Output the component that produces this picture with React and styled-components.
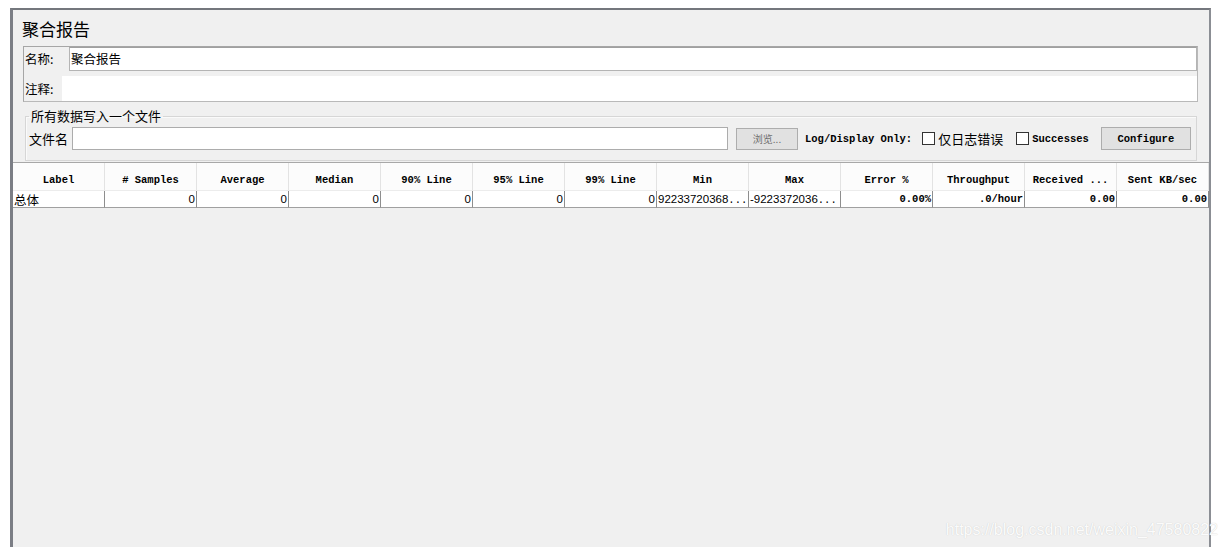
import React from 'react';
import styled, { createGlobalStyle } from 'styled-components';

const GlobalStyle = createGlobalStyle`
  html, body {
    margin: 0;
    background: #ffffff;
  }
  body {
    font-family: "Noto Sans CJK SC", "Liberation Sans", sans-serif;
    color: #000;
  }
`;

const Page = styled.div`
  padding: 8px 0 0 10px;
  height: 547px;
  box-sizing: border-box;
  overflow: hidden;
`;

const Frame = styled.div`
  position: relative;
  width: 1201px;
  height: 539px;
  box-sizing: border-box;
  background: #f0f0f0;
  border-top: 2px solid #74777d;
  border-left: 3px solid #7b7e85;
  border-right: 2px solid #8b8e94;
  display: flex;
  flex-direction: column;
`;

const Title = styled.div`
  height: 36px;
  box-sizing: border-box;
  padding: 8px 0 0 9px;
  font-size: 17px;
  line-height: 22px;
`;

const InfoBox = styled.div`
  margin-left: 10px;
  width: 1175px;
  height: 56px;
  box-sizing: border-box;
  border: 1px solid #b9b9b9;
  border-top-color: #a6a6a6;
  border-left-color: #a6a6a6;
  display: flex;
  flex-direction: column;
`;

const InfoRow = styled.div`
  display: flex;
  align-items: stretch;
  height: ${p => p.$h}px;
  margin-top: ${p => p.$gap || 0}px;
`;

const RowLabel = styled.div`
  width: ${p => p.$w}px;
  flex: none;
  font-size: 12.5px;
  line-height: ${p => p.$lh}px;
  padding-left: 1px;
  box-sizing: border-box;
`;

const TextField = styled.div`
  flex: 1;
  background: #fff;
  border: ${p => (p.$bare ? 'none' : '1px solid #b4b4b4')};
  border-top-color: ${p => (p.$bare ? 'transparent' : '#a0a0a0')};
  font-size: 12.5px;
  line-height: 21px;
  padding-left: 1px;
`;

const FileSet = styled.fieldset`
  margin: 6px 0 0 12px;
  width: 1172px;
  box-sizing: border-box;
  padding: 3px 5px 10px 3px;
  border: 1px solid #d6d6d6;
  box-shadow: inset 1px 1px 0 #fafafa;
  min-inline-size: 0;
`;

const Legend = styled.legend`
  padding: 0 2px;
  font-size: 13px;
  line-height: 16px;
`;

const FileRow = styled.div`
  display: flex;
  align-items: center;
  height: 23px;
  white-space: nowrap;
  & > * { flex: none; }
`;

const FileLabel = styled.span`
  font-size: 13px;
  line-height: 23px;
  width: 43px;
`;

const FileInput = styled.div`
  width: 656px;
  height: 23px;
  box-sizing: border-box;
  background: #fff;
  border: 1px solid #acacac;
`;

const Button = styled.div`
  width: ${p => p.$w}px;
  height: ${p => p.$h}px;
  margin-left: ${p => p.$ml}px;
  box-sizing: border-box;
  background: #e1e1e1;
  border: 1px solid #adadad;
  display: flex;
  align-items: center;
  justify-content: center;
  color: ${p => (p.$dim ? '#6f6f6f' : '#000')};
  font-family: ${p => (p.$mono ? '"Liberation Mono", monospace' : '"Noto Sans CJK SC", sans-serif')};
  font-size: ${p => (p.$mono ? '10.5px' : '10px')};
  font-weight: ${p => (p.$mono ? 'bold' : 'normal')};
`;

const MonoText = styled.span`
  font-family: "Liberation Mono", monospace;
  font-size: 10.5px;
  font-weight: bold;
  margin-left: ${p => p.$ml || 0}px;
  white-space: pre;
`;

const Check = styled.span`
  width: 13px;
  height: 13px;
  box-sizing: border-box;
  background: #fff;
  border: 1px solid #333;
  margin-left: ${p => p.$ml}px;
  margin-right: 3px;
`;

const CheckText = styled.span`
  font-size: 13px;
  line-height: 23px;
`;

const Table = styled.div`
  margin-top: 1px;
  border-top: 1px solid #a8a8a8;
  display: grid;
  grid-template-columns: repeat(13, 92px);
`;

const HeadCell = styled.div`
  height: 28px;
  box-sizing: border-box;
  padding-top: 8px;
  background: #fcfcfc;
  border-right: 1px solid #e3e3e3;
  border-bottom: 1px solid #ececec;
  text-align: center;
  font-family: "Liberation Mono", monospace;
  font-size: 10.5px;
  font-weight: bold;
  line-height: 19px;
  white-space: pre;
  &:last-child { border-right: none; }
`;

const DataCell = styled.div`
  height: 17px;
  box-sizing: border-box;
  background: #fff;
  border-right: 1px solid #8e8e8e;
  border-bottom: 1px solid #a0a0a0;
  padding: 0 1px;
  text-align: ${p => (p.$left ? 'left' : 'right')};
  font-family: ${p => (p.$mono ? '"Liberation Mono", monospace' : p.$cjk ? '"Noto Sans CJK SC", sans-serif' : '"Liberation Sans", sans-serif')};
  font-size: ${p => (p.$mono ? '10.5px' : p.$cjk ? '12.5px' : '11.5px')};
  font-weight: ${p => (p.$mono ? 'bold' : 'normal')};
  line-height: 17px;
  white-space: pre;
`;

const Dots = styled.span`
  font-family: "Liberation Mono", monospace;
  font-size: 10.5px;
`;

const Watermark = styled.div`
  position: absolute;
  right: -9px;
  bottom: 8px;
  font-family: "Liberation Sans", sans-serif;
  font-size: 16px;
  line-height: 18px;
  color: rgba(255, 255, 255, 0.95);
  text-shadow: 0 0 1px #c4c4c4;
  white-space: nowrap;
`;

const headers = ['Label', '# Samples', 'Average', 'Median', '90% Line', '95% Line', '99% Line', 'Min', 'Max', 'Error %', 'Throughput', 'Received ...', 'Sent KB/sec'];

export default function App() {
  return (
    <>
      <GlobalStyle />
      <Page>
        <Frame>
          <Title>聚合报告</Title>
          <InfoBox>
            <InfoRow $h={24}>
              <RowLabel $w={45} $lh={23}>名称:</RowLabel>
              <TextField>聚合报告</TextField>
            </InfoRow>
            <InfoRow $h={25} $gap={5}>
              <RowLabel $w={38} $lh={25}>注释:</RowLabel>
              <TextField $bare />
            </InfoRow>
          </InfoBox>
          <FileSet>
            <Legend>所有数据写入一个文件</Legend>
            <FileRow>
              <FileLabel>文件名</FileLabel>
              <FileInput />
              <Button $w={62} $h={22} $ml={8} $dim>浏览...</Button>
              <MonoText $ml={7}>Log/Display Only:</MonoText>
              <Check $ml={10} />
              <CheckText>仅日志错误</CheckText>
              <Check $ml={13} />
              <MonoText>Successes</MonoText>
              <Button $w={90} $h={23} $ml={12} $mono>Configure</Button>
            </FileRow>
          </FileSet>
          <Table>
            {headers.map(h => <HeadCell key={h}>{h}</HeadCell>)}
            <DataCell $left $cjk>总体</DataCell>
            <DataCell>0</DataCell>
            <DataCell>0</DataCell>
            <DataCell>0</DataCell>
            <DataCell>0</DataCell>
            <DataCell>0</DataCell>
            <DataCell>0</DataCell>
            <DataCell $left>92233720368<Dots>...</Dots></DataCell>
            <DataCell $left>-9223372036<Dots>...</Dots></DataCell>
            <DataCell $mono>0.00%</DataCell>
            <DataCell $mono>.0/hour</DataCell>
            <DataCell $mono>0.00</DataCell>
            <DataCell $mono>0.00</DataCell>
          </Table>
          <Watermark>https://blog.csdn.net/weixin_47580822</Watermark>
        </Frame>
      </Page>
    </>
  );
}
